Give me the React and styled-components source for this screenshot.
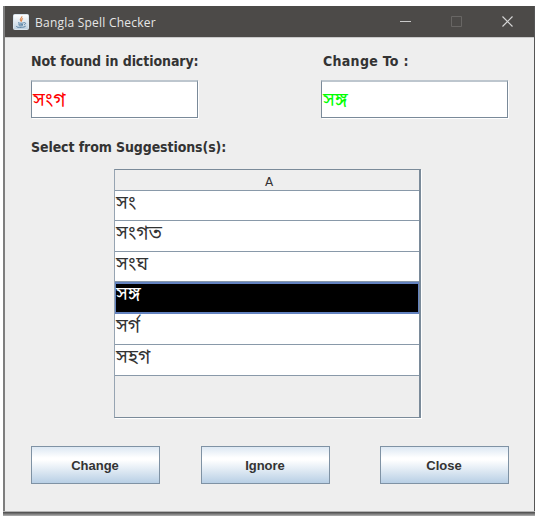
import React from "react";
import styled, { createGlobalStyle } from "styled-components";

const GlobalStyle = createGlobalStyle`
  *, *::before, *::after { box-sizing: border-box; }
  html, body { margin: 0; background: #fff; }
  body { overflow: hidden; }
`;

const Desktop = styled.div`
  width: 535px;
  height: 516px;
  padding: 6px 0 0 3px;
  background: #fff;
`;

const Frame = styled.main`
  width: 532px;
  height: 510px;
  display: flex;
  flex-direction: column;
  border-left: 2px solid #7e7e7e;
  border-right: 1px solid #555;
  background: #eeeeee;
`;

const TitleBar = styled.header`
  flex: none;
  display: flex;
  align-items: center;
  height: 31px;
  padding-left: 8px;
  background: #4c4a48;
  color: #e6e6e6;
`;

const Title = styled.h1`
  flex: 1;
  margin: 2px 0 0 6px;
  font: 400 12px/16px "Open Sans", "Noto Sans", sans-serif;
  letter-spacing: 0.23px;
  white-space: nowrap;
`;

const WindowControls = styled.div`
  display: flex;
  align-items: center;
  gap: 40px;
  padding-right: 21px;
`;

const Glyph = styled.svg`
  display: block;
  flex: none;
`;

const Content = styled.section`
  flex: 1;
  display: flex;
  flex-direction: column;
  padding: 15px 26px 0 26px;
  border-top: 1px solid #c9c9c9;
`;

const Fields = styled.div`
  display: flex;
  justify-content: space-between;
`;

const Field = styled.label`
  display: flex;
  flex-direction: column;
  width: ${(p) => p.$width}px;
`;

const Label = styled.span`
  height: 17px;
  margin-left: ${(p) => p.$indent || 0}px;
  font: 700 14px/17px "DejaVu Sans Condensed", "DejaVu Sans", sans-serif;
  font-stretch: condensed;
  letter-spacing: ${(p) => p.$spacing || 0}px;
  color: #333;
  white-space: nowrap;
`;

const Input = styled.span`
  display: flex;
  align-items: center;
  height: 38px;
  margin-top: 10px;
  padding: 5px 0 0 1px;
  border: 1px solid #7a8a99;
  border-top: 2px solid #bdc6ce;
  box-shadow: 1px 1px 0 #fff;
  background: #fff;
  color: ${(p) => p.$color};
  font: 400 19px/24px "Noto Sans Bengali", "Noto Sans", sans-serif;
`;

const SuggestionHeading = styled.div`
  margin-top: 21px;
  height: 17px;
  display: flex;
`;

const Table = styled.div`
  flex: none;
  width: 307px;
  height: 249px;
  margin: 13px 0 0 83px;
  border: 1px solid #7a8a99;
  border-left-color: #96a4b2;
  border-right-width: 2px;
  box-shadow: 1px 1px 0 #fff;
`;

const ColumnHeader = styled.div`
  height: 21px;
  border-bottom: 1px solid #8999a9;
  padding-left: 4px;
  text-align: center;
  font: 400 12px/24px "DejaVu Sans", sans-serif;
  color: #333;
`;

const Row = styled.div`
  height: ${(p) => p.$height}px;
  padding-left: 1px;
  border-bottom: 1px solid #8999a9;
  background: #fff;
  color: #333;
  font: 400 19px/28px "Noto Sans Bengali", "Noto Sans", sans-serif;
  ${(p) =>
    p.$selected &&
    `
    background: #000;
    color: #fff;
    padding-left: 0;
    border: 1px solid #6382bf;
    border-top-width: 2px;
    border-bottom-width: 2px;
    line-height: 24px;
  `}
`;

const Actions = styled.footer`
  display: flex;
  margin-top: 28px;
`;

const Button = styled.button`
  flex: none;
  width: 129px;
  height: 38px;
  margin: 0 0 0 ${(p) => p.$gap || 0}px;
  padding: 2px 1px 0 0;
  border: 1px solid #7f92a4;
  background: linear-gradient(#dde8f3 0%, #fff 30%, #fff 36%, #b8cfe5 100%);
  color: #333;
  font: 700 13px/16px "Liberation Sans", Arial, sans-serif;
`;

const WindowEdge = styled.div`
  flex: none;
  height: 5px;
  margin: 0 -1px 0 -2px;
  border-top: 1px solid #b4b4b4;
  background: linear-gradient(#555 0 1px, #6e6e6e 1px 2px, #888 2px 3px, #a5a5a5 3px);
`;

const CoffeeIcon = () => (
  <Glyph width="16" height="16" viewBox="0 0 16 16">
    <defs>
      <linearGradient id="tile" x1="0" y1="0" x2="0" y2="1">
        <stop offset="0" stopColor="#fff" />
        <stop offset="1" stopColor="#bed0df" />
      </linearGradient>
    </defs>
    <rect x=".5" y=".5" width="15" height="15" rx="1" fill="url(#tile)" stroke="#d8e4ed" />
    <path d="M8.8 2.3c.8 1.5-2.4 2.4-1.4 3.8.5.7 1 .9.8 1.8M10 4.6c-1.5.8-1.8 1.4-1 2.5" fill="none" stroke="#dd8951" strokeWidth="1.1" />
    <path d="M5 8.7c1.5.7 4.3.7 5.8 0M5.4 10.2c1.2.7 3.4.7 4.7 0M5.8 11.5c1 .5 2.8.5 3.9 0M11.1 8.7c2-.4 2 1.3 0 2.2M3.7 12c-1.7 1.8 7.3 2 9 .1" fill="none" stroke="#5883a6" strokeWidth="1" />
  </Glyph>
);

const suggestions = [
  { word: "সং", height: 30 },
  { word: "সংগত", height: 31 },
  { word: "সংঘ", height: 30 },
  { word: "সঙ্গ", height: 32, selected: true },
  { word: "সর্গ", height: 31 },
  { word: "সহগ", height: 31 },
];

export default function App() {
  return (
    <Desktop>
      <GlobalStyle />
      <Frame>
        <TitleBar>
          <CoffeeIcon />
          <Title>Bangla Spell Checker</Title>
          <WindowControls>
            <Glyph width="11" height="11" viewBox="0 0 11 11">
              <path d="M0 5.5h11" stroke="#c9c9c9" />
            </Glyph>
            <Glyph width="11" height="11" viewBox="0 0 11 11">
              <path d="M.5.5h10v10H.5z" fill="none" stroke="#686664" />
            </Glyph>
            <Glyph width="11" height="11" viewBox="0 0 11 11">
              <path d="M.5.5l10 10M10.5.5l-10 10" stroke="#d6d6d6" strokeWidth="1.2" />
            </Glyph>
          </WindowControls>
        </TitleBar>
        <Content>
          <Fields>
            <Field $width={167}>
              <Label $spacing={-0.08}>Not found in dictionary:</Label>
              <Input $color="#ff0000">সংগ</Input>
            </Field>
            <Field $width={187}>
              <Label $indent={2} $spacing={0.3}>Change To :</Label>
              <Input $color="#00ff00">সঙ্গ</Input>
            </Field>
          </Fields>
          <SuggestionHeading>
            <Label $spacing={-0.1}>Select from Suggestions(s):</Label>
          </SuggestionHeading>
          <Table>
            <ColumnHeader>A</ColumnHeader>
            {suggestions.map((s) => (
              <Row key={s.word} $height={s.height} $selected={s.selected}>
                {s.word}
              </Row>
            ))}
          </Table>
          <Actions>
            <Button>Change</Button>
            <Button $gap={41}>Ignore</Button>
            <Button $gap={50}>Close</Button>
          </Actions>
        </Content>
        <WindowEdge />
      </Frame>
    </Desktop>
  );
}
